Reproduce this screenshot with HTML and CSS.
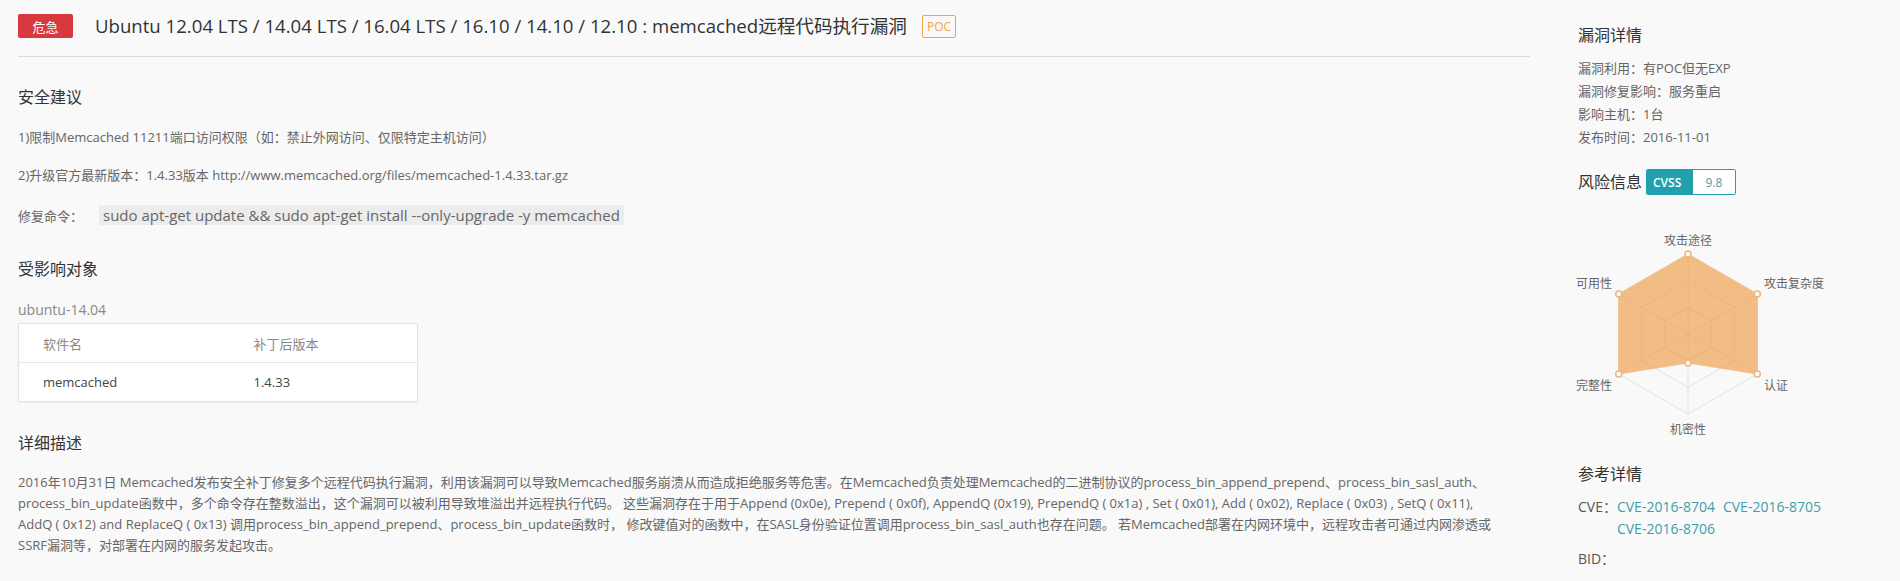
FILE: index.html
```html
<!DOCTYPE html>
<html lang="zh-CN">
<head>
<meta charset="utf-8">
<title>memcached远程代码执行漏洞</title>
<link rel="stylesheet" href="styles.css">
</head>
<body>
<div class="page">
  <main class="main">
    <header class="head">
      <span class="level">危急</span>
      <h1 class="title">Ubuntu 12.04 LTS / 14.04 LTS / 16.04 LTS / 16.10 / 14.10 / 12.10 : memcached远程代码执行漏洞</h1>
      <span class="poc">POC</span>
    </header>

    <h2 class="sec-title sec-first">安全建议</h2>
    <p class="txt">1)限制Memcached 11211端口访问权限（如：禁止外网访问、仅限特定主机访问）</p>
    <p class="txt">2)升级官方最新版本：1.4.33版本 http://www.memcached.org/files/memcached-1.4.33.tar.gz</p>
    <p class="txt cmd-row">修复命令：<code class="cmd">sudo apt-get update &amp;&amp; sudo apt-get install --only-upgrade -y memcached</code></p>

    <h2 class="sec-title sec-affect">受影响对象</h2>
    <div class="os">ubuntu-14.04</div>
    <table class="pkg">
      <thead>
        <tr><th class="c1">软件名</th><th>补丁后版本</th></tr>
      </thead>
      <tbody>
        <tr><td class="c1">memcached</td><td>1.4.33</td></tr>
      </tbody>
    </table>

    <h2 class="sec-title sec-desc">详细描述</h2>
    <p class="desc">2016年10月31日 Memcached发布安全补丁修复多个远程代码执行漏洞，利用该漏洞可以导致Memcached服务崩溃从而造成拒绝服务等危害。在Memcached负责处理Memcached的二进制协议的process_bin_append_prepend、process_bin_sasl_auth、<br>process_bin_update函数中，多个命令存在整数溢出，这个漏洞可以被利用导致堆溢出并远程执行代码。 这些漏洞存在于用于Append (0x0e), Prepend ( 0x0f), AppendQ (0x19), PrependQ ( 0x1a) , Set ( 0x01), Add ( 0x02), Replace ( 0x03) , SetQ ( 0x11),<br>AddQ ( 0x12) and ReplaceQ ( 0x13) 调用process_bin_append_prepend、process_bin_update函数时， 修改键值对的函数中，在SASL身份验证位置调用process_bin_sasl_auth也存在问题。 若Memcached部署在内网环境中，远程攻击者可通过内网渗透或<br>SSRF漏洞等，对部署在内网的服务发起攻击。</p>
  </main>

  <aside class="side">
    <h3 class="side-title first">漏洞详情</h3>
    <ul class="info">
      <li>漏洞利用：有POC但无EXP</li>
      <li>漏洞修复影响：服务重启</li>
      <li>影响主机：1台</li>
      <li>发布时间：2016-11-01</li>
    </ul>

    <div class="risk">
      <h3 class="side-title">风险信息</h3>
      <span class="cvss"><span class="cvss-k">CVSS</span><span class="cvss-v">9.8</span></span>
    </div>

    <svg class="radar" width="260" height="222" viewBox="0 0 260 222">
      <g class="grid">
        <polygon points="112,33 181.28,73 181.28,153 112,193 42.72,153 42.72,73"/>
        <polygon points="112,59.7 158.19,86.3 158.19,139.7 112,166.3 65.81,139.7 65.81,86.3"/>
        <polygon points="112,86.3 135.09,99.7 135.09,126.3 112,139.7 88.91,126.3 88.91,99.7"/>
        <line x1="112" y1="113" x2="112" y2="33"/>
        <line x1="112" y1="113" x2="181.28" y2="73"/>
        <line x1="112" y1="113" x2="181.28" y2="153"/>
        <line x1="112" y1="113" x2="112" y2="193"/>
        <line x1="112" y1="113" x2="42.72" y2="153"/>
        <line x1="112" y1="113" x2="42.72" y2="73"/>
      </g>
      <polygon class="area" points="112,33 181.28,73 181.28,153 112,142 42.72,153 42.72,73"/>
      <g class="dots">
        <circle cx="112" cy="33" r="3"/>
        <circle cx="181.28" cy="73" r="3"/>
        <circle cx="181.28" cy="153" r="3"/>
        <circle cx="112" cy="142" r="3"/>
        <circle cx="42.72" cy="153" r="3"/>
        <circle cx="42.72" cy="73" r="3"/>
      </g>
      <g class="labels">
        <text x="112" y="24" text-anchor="middle">攻击途径</text>
        <text x="188" y="67" text-anchor="start">攻击复杂度</text>
        <text x="188" y="169" text-anchor="start">认证</text>
        <text x="112" y="213" text-anchor="middle">机密性</text>
        <text x="36" y="169" text-anchor="end">完整性</text>
        <text x="36" y="67" text-anchor="end">可用性</text>
      </g>
    </svg>

    <h3 class="side-title ref">参考详情</h3>
    <div class="ref-row">
      <span class="ref-k">CVE：</span>
      <span class="ref-links">
        <a href="#" class="lnk">CVE-2016-8704</a>
        <a href="#" class="lnk">CVE-2016-8705</a>
        <a href="#" class="lnk">CVE-2016-8706</a>
      </span>
    </div>
    <div class="ref-row bid">
      <span class="ref-k">BID：</span>
    </div>
  </aside>
</div>
</body>
</html>
```

FILE: styles.css
```css
* { box-sizing: border-box; }

html, body {
  margin: 0;
  padding: 0;
  background: #f9f9f9;
  font-family: "Open Sans", "Noto Sans CJK SC", sans-serif;
  color: #666;
}

.page {
  display: flex;
  gap: 48px;
  padding: 0 18px;
}

.main {
  width: 1512px;
  flex: none;
}

.head {
  display: flex;
  align-items: center;
  padding-top: 14px;
  padding-bottom: 18px;
  border-bottom: 1px solid #dcdcdc;
}

.level {
  display: inline-flex;
  align-items: center;
  justify-content: center;
  width: 55px;
  height: 24px;
  background: #d8383e;
  color: #fff;
  font-size: 13px;
  border-radius: 2px;
}

.title {
  margin: 0 0 0 22px;
  font-size: 18.6px;
  font-weight: normal;
  color: #333;
  line-height: 24px;
}

.poc {
  margin-left: 15px;
  display: inline-flex;
  align-items: center;
  height: 23px;
  padding: 0 4px;
  border: 1px solid #f0a44c;
  border-radius: 2px;
  color: #f0a44c;
  font-size: 12px;
}

.sec-title {
  margin: 0;
  font-size: 16px;
  font-weight: normal;
  color: #333;
  line-height: 24px;
}

.sec-first { margin-top: 28px; }
.sec-affect { margin-top: 31px; }
.sec-desc { margin-top: 29px; }

.txt {
  margin: 18px 0 0;
  font-size: 13px;
  line-height: 20px;
  color: #666;
}

.cmd-row { margin-top: 20px; }

.cmd {
  display: inline-block;
  margin-left: 16px;
  padding: 0 4px;
  background: #ececec;
  font-family: "Open Sans", "Noto Sans CJK SC", sans-serif;
  font-size: 15px;
  line-height: 20px;
  color: #666;
}

.os {
  margin-top: 19px;
  font-size: 14px;
  line-height: 20px;
  color: #888;
}

.pkg {
  margin-top: 3px;
  width: 400px;
  border-collapse: collapse;
  background: #fff;
  border: 1px solid #e3e3e3;
  box-shadow: 0 1px 2px rgba(0,0,0,0.04);
  font-size: 13px;
}

.pkg th,
.pkg td {
  height: 39px;
  padding: 0;
  text-align: left;
  font-weight: normal;
}

.pkg th { color: #888; border-bottom: 1px solid #e6e6e6; }
.pkg td { color: #444; }
.pkg .c1 { width: 235px; padding-left: 24px; }

.desc {
  margin: 17px 0 0;
  font-size: 13px;
  line-height: 21px;
  color: #666;
}

/* side */
.side {
  width: 300px;
  flex: none;
}

.side-title {
  margin: 0;
  font-size: 16px;
  font-weight: normal;
  color: #333;
  line-height: 24px;
}

.side-title.first { margin-top: 23px; }

.info {
  list-style: none;
  margin: 10px 0 0;
  padding: 0;
  font-size: 13px;
  line-height: 23px;
  color: #666;
}

.risk {
  display: flex;
  align-items: center;
  gap: 4px;
  margin-top: 20px;
  height: 26px;
}

.cvss {
  display: inline-flex;
  height: 26px;
  border: 1px solid #21a0ae;
  border-radius: 2px;
  overflow: hidden;
  font-size: 12px;
}

.cvss-k {
  display: inline-flex;
  align-items: center;
  padding: 0 6px;
  width: 46px;
  background: #21a0ae;
  color: #fff;
  font-weight: 600;
}

.cvss-v {
  display: inline-flex;
  align-items: center;
  justify-content: center;
  width: 42px;
  background: #fff;
  color: #5a98a4;
}

.radar {
  display: block;
  margin-top: 26px;
  margin-left: -2px;
}

.grid polygon, .grid line {
  fill: none;
  stroke: #e2e2e2;
  stroke-width: 1;
}

.area {
  fill: rgba(236, 152, 62, 0.62);
  stroke: #f3c08c;
  stroke-width: 1;
}

.dots circle {
  fill: #fff;
  stroke: #eeb47a;
  stroke-width: 1.5;
}

.labels text {
  font-size: 12px;
  fill: #666;
  font-family: "Noto Sans CJK SC", sans-serif;
}

.side-title.ref { margin-top: 19px; }

.ref-row {
  display: flex;
  font-size: 14px;
  line-height: 22px;
  color: #555;
  margin-top: 10px;
}

.ref-row.bid { margin-top: 8px; }

.ref-links {
  width: 240px;
  display: flex;
  flex-wrap: wrap;
  column-gap: 8px;
}

.lnk {
  color: #3e9ea9;
  text-decoration: none;
}
```
